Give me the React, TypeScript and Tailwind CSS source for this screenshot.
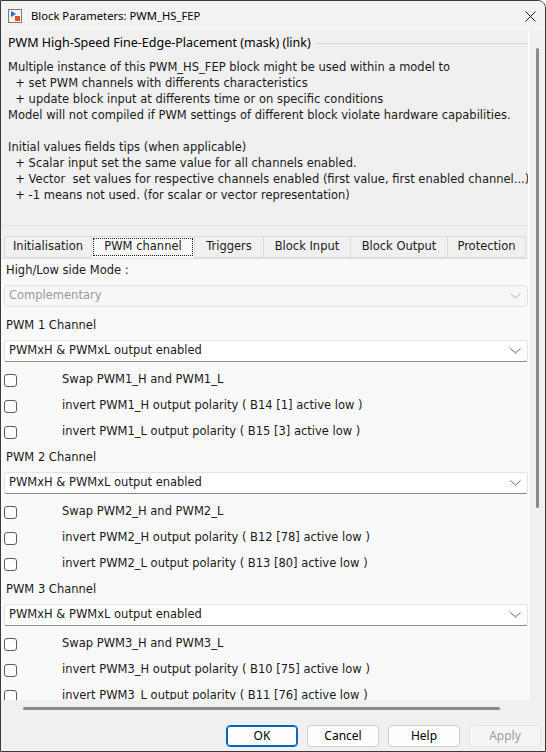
import React from 'react';

const body = "font-['DejaVu_Sans',sans-serif] text-[11.5px] text-[#1a1a1a]";
const ui = "font-['Noto_Sans','Open_Sans',sans-serif]";

const description = [
  'Multiple instance of this PWM_HS_FEP block might be used within a model to',
  '  + set PWM channels with differents characteristics',
  '  + update block input at differents time or on specific conditions',
  'Model will not compiled if PWM settings of different block violate hardware capabilities.',
  '',
  'Initial values fields tips (when applicable)',
  '  + Scalar input set the same value for all channels enabled.',
  '  + Vector  set values for respective channels enabled (first value, first enabled channel...)',
  '  + -1 means not used. (for scalar or vector representation)',
];

const tabs = [
  { label: 'Initialisation', w: 'w-[88px]' },
  { label: 'PWM channel', w: 'w-[104px]' },
  { label: 'Triggers', w: 'w-[70px]' },
  { label: 'Block Input', w: 'w-[88px]' },
  { label: 'Block Output', w: 'w-[98px]' },
  { label: 'Protection', w: 'w-[79px]' },
];

const channels = [
  { n: 1, h: 'B14 [1]', l: 'B15 [3]' },
  { n: 2, h: 'B12 [78]', l: 'B13 [80]' },
  { n: 3, h: 'B10 [75]', l: 'B11 [76]' },
];

const Chevron = ({ color = '#6b6b6b' }: { color?: string }) => (
  <svg width="11" height="6" viewBox="0 0 11 6" fill="none">
    <path d="M0.5 0.5 L5.5 5 L10.5 0.5" stroke={color} strokeWidth="1" />
  </svg>
);

const Select = ({ value, disabled }: { value: string; disabled?: boolean }) => (
  <div
    className={
      'h-[22px] ml-[3px] flex items-center justify-between pl-[4px] pr-[6px] rounded-[3px] border border-[#e3e3e3] ' +
      (disabled ? 'bg-[#f7f7f7] text-[#9a9a9a]' : 'bg-white border-b-[#8a8a8a]')
    }
  >
    <span>{value}</span>
    <Chevron color={disabled ? '#b0b0b0' : '#6b6b6b'} />
  </div>
);

const Check = ({ label }: { label: string }) => (
  <div className="h-[26px] flex items-center pl-[3px]">
    <span className="w-[13px] h-[13px] rounded-[3px] border border-[#5c5c5c] bg-white shrink-0" />
    <span className="ml-[45px] whitespace-nowrap">{label}</span>
  </div>
);

const BlockIcon = () => (
  <svg width="14" height="14" viewBox="0 0 14 14">
    <rect x="0.5" y="0.5" width="13" height="13" fill="#f4f4f4" stroke="#7a7a7a" />
    <path d="M3 2 L8 5 L3 8 Z" fill="#1e6fd9" />
    <rect x="7" y="7" width="5" height="5" fill="#e3531b" />
  </svg>
);

export default function App() {
  return (
    <div className="w-[546px] h-[752px] bg-[#f0f0f0] border border-[#3a3a3a] rounded-tr-[8px] overflow-hidden flex flex-col">
      {/* title bar */}
      <div className="h-[30px] shrink-0 bg-[#f3f3f3] flex items-center pl-[7px] pr-[9px]">
        <BlockIcon />
        <span className={`${ui} ml-[9px] text-[11.25px] text-black`}>Block Parameters: PWM_HS_FEP</span>
        <svg className="ml-auto" width="11" height="11" viewBox="0 0 11 11">
          <path d="M0.5 0.5 L10.5 10.5 M10.5 0.5 L0.5 10.5" stroke="#1a1a1a" strokeWidth="1" />
        </svg>
      </div>

      {/* scrolled pane + vertical scroll bar */}
      <div className="h-[669px] shrink-0 flex">
        <div className="w-[528px] shrink-0 flex flex-col overflow-hidden border-r border-white">
          <div className={`${body} bg-[#f0f0f0] h-[195px] shrink-0 border-b border-[#e2e2e2]`}>
            <div className="h-[22px] flex items-center pl-[7px] pt-[3px]">
              <span className={`${ui} text-[12.5px] text-black whitespace-nowrap`}>
                PWM High-Speed Fine-Edge-Placement (mask) (link)
              </span>
              <div className="flex-1 ml-[4px] h-px bg-[#d8d8d8]" />
            </div>
            <div className="pl-[7px] pt-[6px]">
              {description.map((line, i) => (
                <div key={i} className="h-[16px] leading-[16px] whitespace-pre">
                  {line}
                </div>
              ))}
            </div>
          </div>

          <div className={`${body} flex-1 flex flex-col`}>
            {/* tab strip */}
            <div className="h-[32px] shrink-0 flex items-end pl-[3px]">
              {tabs.map((t, i) => (
                <div
                  key={t.label}
                  className={
                    `${t.w} h-[22px] flex items-center justify-center border border-[#dcdcdc] -ml-px first:ml-0 ` +
                    (i === 1 ? 'bg-[#f9f9f9] border-b-[#f9f9f9] p-[1px]' : 'bg-[#f0f0f0]')
                  }
                >
                  {i === 1 ? (
                    <span className="w-full h-full flex items-center justify-center border border-dotted border-[#1a1a1a] px-2">
                      {t.label}
                    </span>
                  ) : (
                    <span>{t.label}</span>
                  )}
                </div>
              ))}
            </div>

            <div className="flex-1 bg-[#f9f9f9] border-t border-[#e0e0e0] overflow-hidden">
              <div className="h-[24px] flex items-center pl-[5px]">High/Low side Mode :</div>
              <div className="mt-[2px]">
                <Select value="Complementary" disabled />
              </div>
              <div className="h-[7px]" />

              {channels.map(c => (
                <div key={c.n} className="pb-[1px]">
                  <div className="h-[24px] flex items-center pl-[5px]">PWM {c.n} Channel</div>
                  <div className="mt-[2px]">
                    <Select value="PWMxH & PWMxL output enabled" />
                  </div>
                  <div className="mt-[5px]">
                    <Check label={`Swap PWM${c.n}_H and PWM${c.n}_L`} />
                    <Check label={`invert PWM${c.n}_H output polarity ( ${c.h} active low )`} />
                    <Check label={`invert PWM${c.n}_L output polarity ( ${c.l} active low )`} />
                  </div>
                </div>
              ))}
            </div>
          </div>
        </div>

        <div className="flex-1 flex justify-center pt-[17px]">
          <div className="w-[3px] h-[460px] rounded-full bg-[#8a8a8a]" />
        </div>
      </div>

      {/* horizontal scroll bar */}
      <div className="h-[17px] shrink-0 flex items-center pl-[22px]">
        <div className="w-[477px] h-[3px] rounded-full bg-[#8a8a8a]" />
      </div>

      {/* dialog buttons */}
      <div className={`${ui} flex-1 flex items-start justify-end gap-[9px] pt-[8px] pr-[4px] text-[12px]`}>
        <button className="w-[72px] h-[22px] rounded-[4px] border border-[#0067c0] bg-[#fdfdfd] text-black outline outline-1 outline-[#0067c0] -outline-offset-2">
          OK
        </button>
        <button className="w-[72px] h-[22px] rounded-[4px] border border-[#d0d0d0] bg-[#fdfdfd] text-black">
          Cancel
        </button>
        <button className="w-[72px] h-[22px] rounded-[4px] border border-[#d0d0d0] bg-[#fdfdfd] text-black">
          Help
        </button>
        <button className="w-[72px] h-[22px] rounded-[4px] border border-[#e5e5e5] bg-[#f5f5f5] text-[#9d9d9d]">
          Apply
        </button>
      </div>
    </div>
  );
}
